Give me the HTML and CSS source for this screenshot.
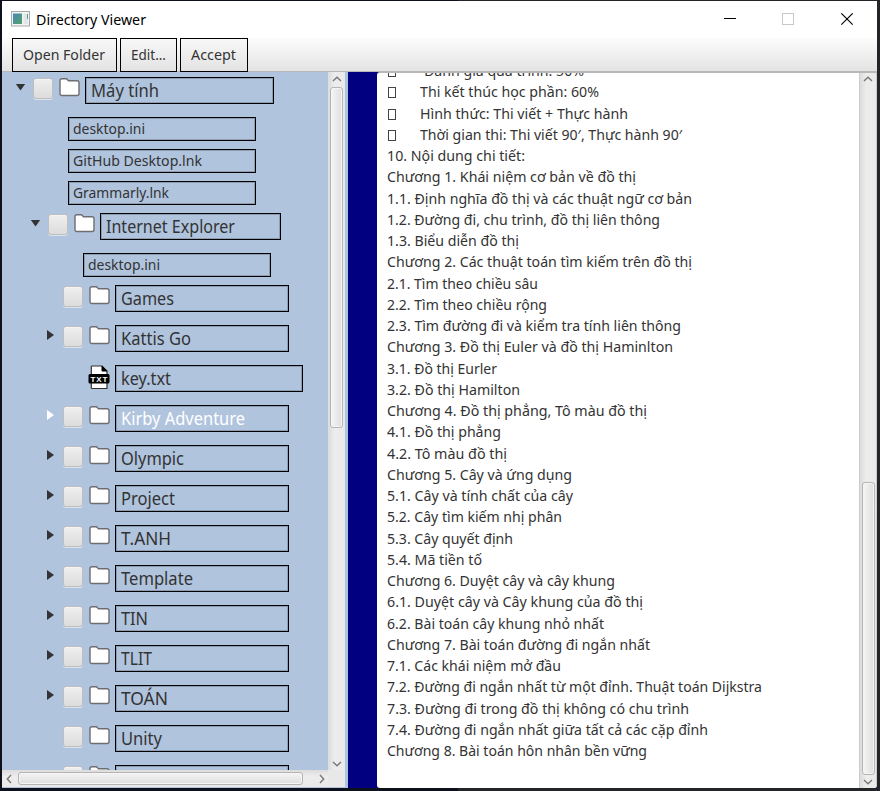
FILE: index.html
```html
<!DOCTYPE html>
<html lang="vi">
<head>
<meta charset="utf-8">
<title>Directory Viewer</title>
<link rel="stylesheet" href="styles.css">
</head>
<body>
<svg width="0" height="0" class="defs">
  <symbol id="folder" viewBox="0 0 21 20">
    <path d="M3 1.700H7.500L9.500 3.700H18Q20 3.700 20 5.700V16.500Q20 18.500 18 18.500H3Q1 18.500 1 16.500V3.700Q1 1.700 3 1.700Z" fill="#fff" stroke="#6d6e72" stroke-width="1.400"/>
  </symbol>
  <symbol id="txt" viewBox="0 0 22 25">
    <path d="M4 1H14L19 6V23.500H4Q3.300 23.500 3.300 22.800V1.700Q3.300 1 4 1Z" fill="#fff" stroke="#333" stroke-width="1.200"/>
    <path d="M14 1L19 6H14Z" fill="#000" stroke="#000"/>
    <rect x="0.500" y="9" width="21" height="9.500" rx="1.500" fill="#000"/>
    <text x="2.500" y="16.800" textLength="17" lengthAdjust="spacing" class="txt-label">TXT</text>
  </symbol>
  <symbol id="up" viewBox="0 0 10 6"><path d="M1 5L5 1.300L9 5" fill="none" stroke="#777" stroke-width="1.400"/></symbol>
  <symbol id="down" viewBox="0 0 10 6"><path d="M1 1L5 4.700L9 1" fill="none" stroke="#777" stroke-width="1.400"/></symbol>
  <symbol id="left" viewBox="0 0 6 10"><path d="M5 1L1.300 5L5 9" fill="none" stroke="#777" stroke-width="1.400"/></symbol>
  <symbol id="right" viewBox="0 0 6 10"><path d="M1 1L4.700 5L1 9" fill="none" stroke="#777" stroke-width="1.400"/></symbol>
</svg>
<div class="window">
  <header class="titlebar">
    <svg class="app-icon" width="19" height="16" viewBox="0 0 19 16">
      <defs><linearGradient id="g" x1="0" y1="0" x2="1" y2="1"><stop offset="0" stop-color="#4b86b4"/><stop offset="1" stop-color="#4fa36b"/></linearGradient></defs>
      <rect x=".5" y=".5" width="18" height="14.500" fill="#f4f4f4" stroke="#a5a9ac"/>
      <rect x="2" y="2.500" width="9" height="10.500" fill="url(#g)"/>
      <rect x="12.500" y="2.500" width="4.500" height="10.500" fill="#e3e6e8"/>
      <path d="M16.500 3V8" stroke="#58a08a"/>
    </svg>
    <span class="title"><span data-w="110">Directory Viewer</span></span>
    <svg class="controls" width="132" height="14" viewBox="0 0 132 14" fill="none">
      <path d="M0 5.500H12" stroke="#000"/>
      <rect x="58.500" y="0.500" width="11" height="11" stroke="#c8c8c8"/>
      <path d="M117.300 0.300L128.700 11.700M128.700 0.300L117.300 11.700" stroke="#000" stroke-width="1.100"/>
    </svg>
  </header>
  <div class="toolbar">
    <button class="b1"><span data-w="82">Open Folder</span></button>
    <button class="b2"><span data-w="35">Edit...</span></button>
    <button class="b3"><span data-w="45">Accept</span></button>
  </div>
  <main class="main">
    <section class="side">
      <div class="tree">
        <div class="row l0"><i class="arrow open"></i><i class="check"></i><svg class="ic"><use href="#folder"/></svg><div class="box w0"><span data-w="68">Máy tính</span></div></div>
        <div class="leaf"><div class="box small"><span data-w="72">desktop.ini</span></div></div>
        <div class="leaf"><div class="box small"><span data-w="129">GitHub Desktop.lnk</span></div></div>
        <div class="leaf"><div class="box small"><span data-w="96">Grammarly.lnk</span></div></div>
        <div class="row l1"><i class="arrow open"></i><i class="check"></i><svg class="ic"><use href="#folder"/></svg><div class="box w1"><span data-w="129">Internet Explorer</span></div></div>
        <div class="leaf deep"><div class="box small"><span data-w="72">desktop.ini</span></div></div>
        <div class="row"><i class="arrow"></i><i class="check"></i><svg class="ic"><use href="#folder"/></svg><div class="box"><span data-w="53">Games</span></div></div>
        <div class="row"><i class="arrow shut"></i><i class="check"></i><svg class="ic"><use href="#folder"/></svg><div class="box"><span data-w="70">Kattis Go</span></div></div>
        <div class="row"><i class="arrow"></i><i class="nocheck"></i><svg class="ic-txt"><use href="#txt"/></svg><div class="box wf"><span data-w="50">key.txt</span></div></div>
        <div class="row selected"><i class="arrow shut"></i><i class="check"></i><svg class="ic"><use href="#folder"/></svg><div class="box"><span data-w="124">Kirby Adventure</span></div></div>
        <div class="row"><i class="arrow shut"></i><i class="check"></i><svg class="ic"><use href="#folder"/></svg><div class="box"><span data-w="63">Olympic</span></div></div>
        <div class="row"><i class="arrow shut"></i><i class="check"></i><svg class="ic"><use href="#folder"/></svg><div class="box"><span data-w="54">Project</span></div></div>
        <div class="row"><i class="arrow shut"></i><i class="check"></i><svg class="ic"><use href="#folder"/></svg><div class="box"><span data-w="50">T.ANH</span></div></div>
        <div class="row"><i class="arrow shut"></i><i class="check"></i><svg class="ic"><use href="#folder"/></svg><div class="box"><span data-w="72">Template</span></div></div>
        <div class="row"><i class="arrow shut"></i><i class="check"></i><svg class="ic"><use href="#folder"/></svg><div class="box"><span data-w="27">TIN</span></div></div>
        <div class="row"><i class="arrow shut"></i><i class="check"></i><svg class="ic"><use href="#folder"/></svg><div class="box"><span data-w="31">TLIT</span></div></div>
        <div class="row"><i class="arrow shut"></i><i class="check"></i><svg class="ic"><use href="#folder"/></svg><div class="box"><span data-w="47">TOÁN</span></div></div>
        <div class="row"><i class="arrow"></i><i class="check"></i><svg class="ic"><use href="#folder"/></svg><div class="box"><span data-w="41">Unity</span></div></div>
        <div class="row"><i class="arrow"></i><i class="check"></i><svg class="ic"><use href="#folder"/></svg><div class="box"></div></div>
      </div>
      <div class="vbar tree-v"><svg width="10" height="6"><use href="#up"/></svg><div class="thumb"></div><svg width="10" height="6"><use href="#down"/></svg></div>
      <div class="hbar"><svg width="6" height="10"><use href="#left"/></svg><div class="thumb"></div><svg width="6" height="10"><use href="#right"/></svg></div>
      <div class="corner"></div>
    </section>
    <section class="viewer">
      <div class="doc">
        <div class="lines">
          <p class="item"><i class="mark"></i><span class="first" data-w="160">Đánh giá quá trình: 50%</span></p>
          <p class="item"><i class="mark"></i><span data-w="179">Thi kết thúc học phần: 60%</span></p>
          <p class="item"><i class="mark"></i><span data-w="208">Hình thức: Thi viết + Thực hành</span></p>
          <p class="item"><i class="mark"></i><span data-w="262">Thời gian thi: Thi viết 90′, Thực hành 90′</span></p>
          <p><span data-w="138">10. Nội dung chi tiết:</span></p>
          <p><span data-w="249">Chương 1. Khái niệm cơ bản về đồ thị</span></p>
          <p><span data-w="305">1.1. Định nghĩa đồ thị và các thuật ngữ cơ bản</span></p>
          <p><span data-w="273">1.2. Đường đi, chu trình, đồ thị liên thông</span></p>
          <p><span data-w="132">1.3. Biểu diễn đồ thị</span></p>
          <p><span data-w="305">Chương 2. Các thuật toán tìm kiếm trên đồ thị</span></p>
          <p><span data-w="151">2.1. Tìm theo chiều sâu</span></p>
          <p><span data-w="160">2.2. Tìm theo chiều rộng</span></p>
          <p><span data-w="294">2.3. Tìm đường đi và kiểm tra tính liên thông</span></p>
          <p><span data-w="286">Chương 3. Đồ thị Euler và đồ thị Haminlton</span></p>
          <p><span data-w="110">3.1. Đồ thị Eurler</span></p>
          <p><span data-w="133">3.2. Đồ thị Hamilton</span></p>
          <p><span data-w="260">Chương 4. Đồ thị phẳng, Tô màu đồ thị</span></p>
          <p><span data-w="114">4.1. Đồ thị phẳng</span></p>
          <p><span data-w="120">4.2. Tô màu đồ thị</span></p>
          <p><span data-w="185">Chương 5. Cây và ứng dụng</span></p>
          <p><span data-w="186">5.1. Cây và tính chất của cây</span></p>
          <p><span data-w="175">5.2. Cây tìm kiếm nhị phân</span></p>
          <p><span data-w="126">5.3. Cây quyết định</span></p>
          <p><span data-w="95">5.4. Mã tiền tố</span></p>
          <p><span data-w="228">Chương 6. Duyệt cây và cây khung</span></p>
          <p><span data-w="256">6.1. Duyệt cây và Cây khung của đồ thị</span></p>
          <p><span data-w="217">6.2. Bài toán cây khung nhỏ nhất</span></p>
          <p><span data-w="263">Chương 7. Bài toán đường đi ngắn nhất</span></p>
          <p><span data-w="174">7.1. Các khái niệm mở đầu</span></p>
          <p><span data-w="375">7.2. Đường đi ngắn nhất từ một đỉnh. Thuật toán Dijkstra</span></p>
          <p><span data-w="302">7.3. Đường đi trong đồ thị không có chu trình</span></p>
          <p><span data-w="321">7.4. Đường đi ngắn nhất giữa tất cả các cặp đỉnh</span></p>
          <p><span data-w="260">Chương 8. Bài toán hôn nhân bền vững</span></p>
        </div>
      </div>
      <div class="vbar doc-v"><svg width="10" height="6"><use href="#up"/></svg><div class="thumb"></div><svg width="10" height="6"><use href="#down"/></svg></div>
    </section>
  </main>
</div>
<script src="fit.js"></script>
</body>
</html>
```
FILE: styles.css
```css
* { box-sizing: border-box; }
body {
  margin: 0;
  width: 880px;
  height: 791px;
  overflow: hidden;
  padding: 1px 3px 3px 2px;
  background: linear-gradient(90deg, #0d111b 0 458px, #222428 458px);
  font-family: "Noto Sans", "Open Sans", sans-serif;
  color: #333;
}
.defs { position: absolute; }
.window { height: 787px; display: flex; flex-direction: column; background: #fff; }
.titlebar { height: 37px; display: flex; align-items: center; padding-left: 9px; background: #fff; }
.title { margin: 0 0 2px 6px; font-size: 14.500px; color: #000; white-space: nowrap; flex: 1; }
.app-icon { margin-bottom: 1px; }
.controls { margin-right: 21px; }
.toolbar {
  height: 34px;
  display: flex;
  gap: 3px;
  padding-left: 10px;
  background: linear-gradient(#fcfcfc, #e3e3e3);
  box-shadow: inset 0 -1px #b8b8b8;
  flex: none;
}
.toolbar button {
  height: 34px;
  padding: 0 0 2px 10px;
  border: 1px solid #000;
  background: linear-gradient(#f8f8f8, #e3e3e3);
  font: 15px "Noto Sans", sans-serif;
  color: #333;
  text-align: left;
  white-space: nowrap;
}
.b1 { width: 105px; }
.b2 { width: 57px; }
.b3 { width: 68px; }
.main { flex: 1; min-height: 0; display: flex; background: #000080; }
.side {
  width: 346px;
  display: grid;
  grid-template: 698px 17px / 326px 18px;
  background: #b0c4de;
}
.tree { overflow: hidden; padding-top: 5px; }
.row { height: 40px; display: flex; margin-left: 44px; }
.row.l0 { margin-left: 14px; }
.row.l1 { margin-left: 29px; }
.leaf { height: 32px; padding-left: 66px; }
.leaf.deep { padding-left: 81px; }
.arrow { width: 16.500px; flex: none; }
.arrow::before { content: ""; display: block; background: #333; }
.arrow.open::before { width: 10px; height: 7px; margin: 6.500px 0 0 -0.500px; clip-path: polygon(0 0, 100% 0, 50% 100%); }
.arrow.shut::before { width: 7px; height: 10px; margin: 5px 0 0 1px; clip-path: polygon(0 0, 100% 50%, 0 100%); }
.check {
  width: 20.500px;
  height: 21px;
  margin: 1px 6px 0 0;
  flex: none;
  border: 1px solid #bfbfbf;
  border-radius: 3px;
  background: linear-gradient(#efefef, #dcdcdc);
  box-shadow: inset 0 1px #f5f5f5, 0 1px #dbe3ee;
}
.nocheck { width: 26.500px; flex: none; }
.ic { width: 21px; height: 20px; margin-right: 5px; flex: none; }
.ic-txt { width: 22px; height: 25px; margin: 0 5px 0 -1px; flex: none; }
.txt-label { font: bold 8px "Liberation Sans", sans-serif; fill: #fff; }
.box {
  width: 174px;
  height: 27px;
  padding-left: 5px;
  border: 1px solid #000;
  box-shadow: inset 0 0 0 1px #8d9db4;
  font-size: 18.500px;
  line-height: 23px;
  white-space: nowrap;
}
.box.w0 { width: 189px; }
.box.w1 { width: 181px; }
.box.wf { width: 188px; }
.box.small { width: 188px; height: 24px; padding-left: 4px; font-size: 14.500px; line-height: 21px; }
.selected { color: #fff; }
.selected .arrow::before { background: #fff; }
.vbar {
  display: flex;
  flex-direction: column;
  align-items: center;
  background: linear-gradient(90deg, #dcdcdc, #ededed 40%, #e9e9e9);
}
.thumb {
  border: 1px solid #b4b4b4;
  border-radius: 3px;
  background: linear-gradient(90deg, #f6f6f6, #dedede);
  box-shadow: inset 0 0 0 1px #f5f5f5;
}
.vbar .thumb { width: 13px; }
.tree-v { width: 17px; padding-top: 4px; }
.tree-v .thumb { height: 341px; margin: 5px 0 333px; flex: none; }
.tree-v svg, .doc-v svg { flex: none; }
.hbar {
  display: flex;
  align-items: center;
  padding-left: 4px;
  background: linear-gradient(#dcdcdc, #ededed 40%, #e9e9e9);
}
.hbar .thumb { width: 285px; height: 13px; margin: 0 16px 0 6px; background: linear-gradient(#f4f4f4, #dedede); }
.corner { width: 17px; background: #e8e8e8; }
.viewer { flex: 1; margin-left: 29px; display: flex; background: #fff; border-radius: 3px 0 3px 3px; overflow: hidden; border-top: 1px solid #b8b8b8; }
.doc { flex: 1; overflow: hidden; padding-left: 10px; }
.lines { margin-top: -12.900px; font-size: 15px; }
.lines p { margin: 0; height: 21.250px; line-height: 21.250px; white-space: nowrap; }
.item { display: flex; }
.mark { width: 8px; height: 11px; border: 1px solid #444; margin: 6px 24px 0 1px; }
.item .first { margin-left: 4px; }
.doc-v { width: 18px; padding-top: 3px; border-left: 1px solid #ccc; border-right: 1px solid #ccc; }
.doc-v .thumb { height: 293px; margin: 400px 0 4px; flex: none; }
[data-w] { display: inline-block; transform-origin: 0 50%; }
```
FILE: fit.js
```js
// Condense each label horizontally to its nominal width.
document.fonts.ready.then(() => {
  document.querySelectorAll("[data-w]").forEach((el) => {
    const natural = el.getBoundingClientRect().width;
    el.style.transform = `scaleX(${el.dataset.w / natural})`;
  });
});
```
